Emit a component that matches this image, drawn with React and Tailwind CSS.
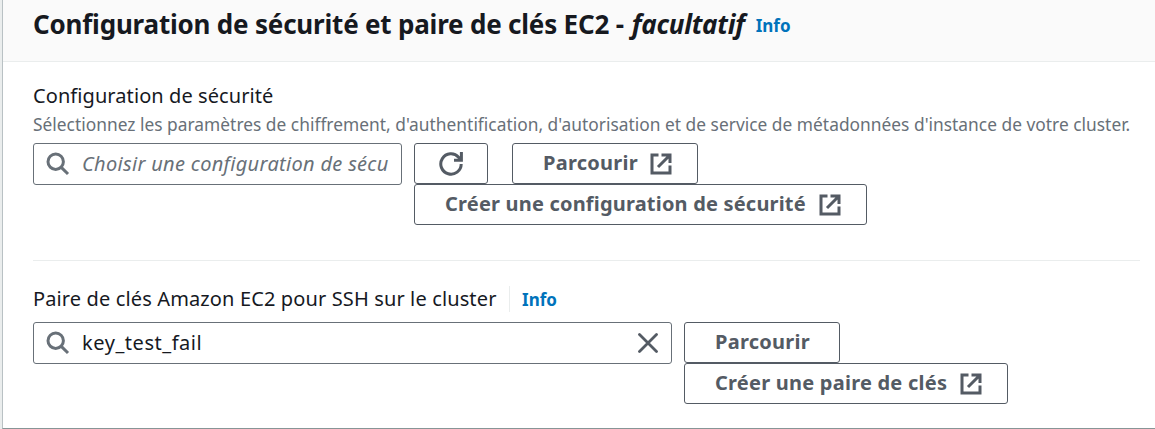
const Search = () => (
  <svg className="h-[24px] w-[24px] shrink-0" viewBox="0 0 24 24" fill="none" stroke="#687078" strokeWidth="3">
    <circle cx="9.7" cy="9.7" r="7.7" />
    <path d="M15 15.1l7 6.9" />
  </svg>
);

const Refresh = () => (
  <svg className="h-[24px] w-[24px]" viewBox="0 0 24 24" fill="none" stroke="#545b64" strokeWidth="3">
    <path d="M22.2 12A10.2 10.2 0 1 1 19.6 5.2L21 7.5" />
    <path d="M22.4 0v8.2H15" />
  </svg>
);

const External = () => (
  <svg className="h-[22px] w-[22px] shrink-0" viewBox="0 0 22 22" fill="none" stroke="#545b64" strokeWidth="3">
    <path d="M8.5 2H2v18h18v-7.5" />
    <path d="M11.5 2H20v8M20 2L8 14" />
    <path d="M16 2h4v4z" fill="#545b64" strokeWidth="1" />
  </svg>
);

const Close = () => (
  <svg className="h-[20px] w-[20px]" viewBox="0 0 20 20" fill="none" stroke="#545b64" strokeWidth="2.8" strokeLinecap="round">
    <path d="M1.5 1.5l17 17M18.5 1.5l-17 17" />
  </svg>
);

const Button = ({ className = "", children }) => (
  <button
    className={`flex h-[41px] items-center rounded-[3px] border border-[#545b64] bg-white pl-[30px] text-[20px] font-bold whitespace-nowrap text-[#545b64] ${className}`}
  >
    {children}
  </button>
);

const Info = ({ className = "" }) => (
  <a className={`text-[17px] font-bold text-[#0073bb] ${className}`}>Info</a>
);

export default function App() {
  return (
    <div className="flex h-[429px] w-[1155px] overflow-hidden bg-[#eaeded] pl-[2px] font-['Noto_Sans','Open_Sans',sans-serif] text-[#16191f]">
      <section className="flex w-full flex-col border-b border-l border-b-[#879596] border-l-[#b9c1c4] bg-white">
        <header className="flex h-[62px] shrink-0 items-start border-b border-[#eaeded] bg-[#fafafa] pt-[6px] pl-[30px] whitespace-nowrap">
          <h2 className="text-[26px] leading-[36px] font-bold">
            <span className="tracking-[-0.2px]">Configuration de sécurité et paire de clés EC2 -</span>
            <em className="ml-[8px] tracking-[-0.25px]">facultatif</em>
          </h2>
          <Info className="ml-[11px] leading-[40px]" />
        </header>

        <div className="flex flex-col pt-[20px] pl-[30px]">
          <label className="h-[28px] text-[20px] leading-[28px] tracking-[0.08px]">Configuration de sécurité</label>
          <p className="h-[33px] text-[17.33px] leading-[28px] tracking-[0.02px] whitespace-nowrap text-[#687078]">
            Sélectionnez les paramètres de chiffrement, d'authentification, d'autorisation et de service de métadonnées
            d'instance de votre cluster.
          </p>
          <div className="flex gap-[12px]">
            <div className="flex h-[42px] w-[369px] items-center rounded-[3px] border border-[#687078] pl-[12px]">
              <Search />
              <span className="ml-[12px] text-[20px] tracking-[0.31px] whitespace-nowrap text-[#687078] italic">
                Choisir une configuration de sécu
              </span>
            </div>
            <div className="flex flex-col items-start">
              <div className="flex gap-[24px]">
                <Button className="w-[74px] justify-center pl-0!">
                  <Refresh />
                </Button>
                <Button className="w-[186px] gap-[12px] tracking-[0.25px]">
                  <span className="pb-[2px]">Parcourir</span>
                  <External />
                </Button>
              </div>
              <Button className="w-[453px] gap-[13px] tracking-[0.19px]">
                <span className="pb-[2px]">Créer une configuration de sécurité</span>
                <External />
              </Button>
            </div>
          </div>
        </div>

        <hr className="mt-[35px] mr-[15px] ml-[30px] border-[#eaeded]" />

        <div className="flex flex-col pt-[25px] pl-[30px]">
          <div className="flex h-[36px] items-start">
            <label className="text-[20px] leading-[26px] tracking-[0.13px]">
              Paire de clés Amazon EC2 pour SSH sur le cluster
            </label>
            <div className="ml-[12.5px] flex h-[26px] border-l border-[#eaeded] pl-[12px]">
              <Info className="leading-[28px]" />
            </div>
          </div>
          <div className="flex gap-[12px]">
            <div className="flex h-[42px] w-[639px] items-center rounded-[3px] border border-[#687078] pr-[13px] pl-[12px]">
              <Search />
              <span className="ml-[12px] grow text-[20px] tracking-[0.54px]">key_test_fail</span>
              <Close />
            </div>
            <div className="flex flex-col items-start">
              <Button className="w-[156px] tracking-[0.25px]">
                <span className="pb-[2px]">Parcourir</span>
              </Button>
              <Button className="w-[324px] gap-[13px] tracking-[0.23px]">
                <span className="pb-[2px]">Créer une paire de clés</span>
                <External />
              </Button>
            </div>
          </div>
        </div>
        <div className="grow" />
      </section>
    </div>
  );
}
